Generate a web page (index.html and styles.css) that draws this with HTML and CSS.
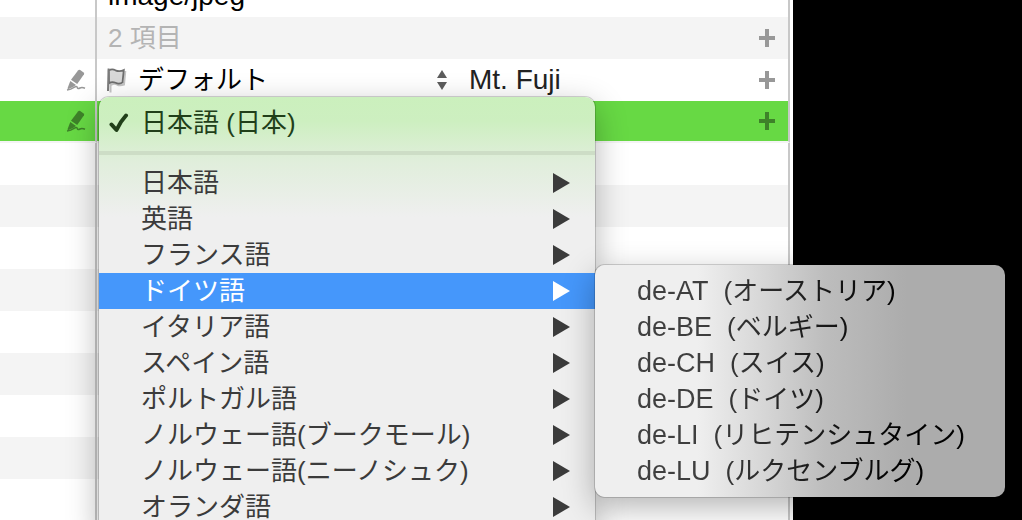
FILE: index.html
```
<!DOCTYPE html>
<html lang="ja">
<head>
    <meta charset="UTF-8">
    <meta name="viewport" content="width=device-width, initial-scale=1.0">
    <link rel="stylesheet" href="styles.css">
    <title>image/jpeg</title>
</head>
<body>
    <!-- Shared icons -->
    <svg class="sprite" aria-hidden="true">
        <symbol id="pen" viewBox="0 0 20 22">
            <path d="M12 1.5 Q13 .3 14.2 1 L17.6 3.4 Q18.600 4.300 18 5.300 L11.200 15 L5 10.700 Z"/>
            <path d="M4.300 12 L10 16 L7 18 L2.500 20 Q1.300 20.200 1.600 19 Z"/>
            <path d="M1 21 Q5 20.500 8 18.300 Q11 16.500 11.300 18.500 Q11.500 20.300 14 19 Q16 18 19 19.300" fill="none" stroke="currentColor" stroke-width="1.500"/>
        </symbol>
        <symbol id="plus" viewBox="0 0 16 18">
            <path d="M6 0h4v7h6v4h-6v7H6v-7H0V7h6z"/>
        </symbol>
        <symbol id="arrow" viewBox="0 0 17 20">
            <path d="M0 0L17 10L0 20z"/>
        </symbol>
    </svg>

    <main class="sheet">
        <table class="items">
            <tr>
                <td class="gutter"></td>
                <td class="kind type">image/jpeg</td>
                <td></td>
                <td class="action"></td>
            </tr>
            <tr>
                <td class="gutter"></td>
                <td class="kind count">2 項目</td>
                <td></td>
                <td class="action"><button class="icon-button" aria-label="追加"><svg class="plus"><use href="#plus"/></svg></button></td>
            </tr>
            <tr>
                <td class="gutter"><button class="icon-button" aria-label="編集"><svg class="pen"><use href="#pen"/></svg></button></td>
                <td class="kind">
                    <div class="picker">
                        <svg class="flag" viewBox="0 0 22 27" aria-hidden="true">
                            <path d="M4.500 4 V25.500 M5 18 Q8 15.500 11 17.500 Q14 19 18 17.500 L19.300 4" fill="none" stroke="#c4c4c4" stroke-width="2"/>
                            <path d="M2.800 3.500 Q6 1.500 9.500 3.300 Q13.500 5 17.800 3 L16.500 15.500 Q13 17.500 9.500 15.800 Q6 14.200 3 16.300 Z" fill="#d8d8d8" stroke="#6e6e6e" stroke-width="1.800"/>
                            <path d="M2.600 1.500 L2 24" stroke="#7b7b7b" stroke-width="2"/>
                        </svg>
                        <select aria-label="言語">
                            <option>デフォルト</option>
                            <option>日本語 (日本)</option>
                        </select>
                        <svg class="stepper" viewBox="0 0 10 20" aria-hidden="true">
                            <path d="M5 0L10 8H0z M0 12H10L5 20z"/>
                        </svg>
                    </div>
                </td>
                <td><input type="text" aria-label="名前" value="Mt. Fuji"></td>
                <td class="action"><button class="icon-button" aria-label="追加"><svg class="plus"><use href="#plus"/></svg></button></td>
            </tr>
            <tr class="selected">
                <td class="gutter"><button class="icon-button" aria-label="編集"><svg class="pen"><use href="#pen"/></svg></button></td>
                <td class="kind">
                    <div class="menu language-menu" role="menu">
                        <button class="item current" role="menuitemradio" aria-checked="true">
                            <svg class="check" viewBox="0 0 20 20" aria-hidden="true"><path d="M2.500 11.500 L7.500 17 Q11 9 17 2.500" fill="none" stroke="currentColor" stroke-width="4" stroke-linecap="round" stroke-linejoin="round"/></svg>
                            日本語 (日本)
                        </button>
                        <hr>
                        <button class="item" role="menuitem">日本語<svg class="arrow"><use href="#arrow"/></svg></button>
                        <button class="item" role="menuitem">英語<svg class="arrow"><use href="#arrow"/></svg></button>
                        <button class="item" role="menuitem">フランス語<svg class="arrow"><use href="#arrow"/></svg></button>
                        <div class="branch">
                            <button class="item open" role="menuitem" aria-expanded="true">ドイツ語<svg class="arrow"><use href="#arrow"/></svg></button>
                            <div class="menu submenu" role="menu">
                                <button class="item" role="menuitem"><span class="locale"><span class="code">de-AT&nbsp; </span>(オーストリア)</span></button>
                                <button class="item" role="menuitem"><span class="locale"><span class="code">de-BE&nbsp; </span>(ベルギー)</span></button>
                                <button class="item" role="menuitem"><span class="locale"><span class="code">de-CH&nbsp; </span>(スイス)</span></button>
                                <button class="item" role="menuitem"><span class="locale"><span class="code">de-DE&nbsp; </span>(ドイツ)</span></button>
                                <button class="item" role="menuitem"><span class="locale"><span class="code">de-LI&nbsp; </span>(リヒテンシュタイン)</span></button>
                                <button class="item" role="menuitem"><span class="locale"><span class="code">de-LU&nbsp; </span>(ルクセンブルグ)</span></button>
                            </div>
                        </div>
                        <button class="item" role="menuitem">イタリア語<svg class="arrow"><use href="#arrow"/></svg></button>
                        <button class="item" role="menuitem">スペイン語<svg class="arrow"><use href="#arrow"/></svg></button>
                        <button class="item" role="menuitem">ポルトガル語<svg class="arrow"><use href="#arrow"/></svg></button>
                        <button class="item" role="menuitem">ノルウェー語(ブークモール)<svg class="arrow"><use href="#arrow"/></svg></button>
                        <button class="item" role="menuitem">ノルウェー語(ニーノシュク)<svg class="arrow"><use href="#arrow"/></svg></button>
                        <button class="item" role="menuitem">オランダ語<svg class="arrow"><use href="#arrow"/></svg></button>
                    </div>
                </td>
                <td></td>
                <td class="action"><button class="icon-button" aria-label="追加"><svg class="plus"><use href="#plus"/></svg></button></td>
            </tr>
            <tr><td class="gutter"></td><td></td><td></td><td class="action"></td></tr>
            <tr><td class="gutter"></td><td></td><td></td><td class="action"></td></tr>
            <tr><td class="gutter"></td><td></td><td></td><td class="action"></td></tr>
            <tr><td class="gutter"></td><td></td><td></td><td class="action"></td></tr>
            <tr><td class="gutter"></td><td></td><td></td><td class="action"></td></tr>
            <tr><td class="gutter"></td><td></td><td></td><td class="action"></td></tr>
            <tr><td class="gutter"></td><td></td><td></td><td class="action"></td></tr>
            <tr><td class="gutter"></td><td></td><td></td><td class="action"></td></tr>
            <tr><td class="gutter"></td><td></td><td></td><td class="action"></td></tr>
        </table>
    </main>
</body>
</html>
```
FILE: styles.css
```
/* Reset */
* {
    margin: 0;
    padding: 0;
    box-sizing: border-box;
}

body {
    height: 100vh;
    overflow: hidden;
    background: #000;
    color: #000;
    font: 26px/36px "Liberation Sans", "Noto Sans CJK JP", sans-serif;
}

button, input, select {
    border: none;
    background: none;
    color: inherit;
    font: inherit;
    appearance: none;
}

svg {
    display: block;
    fill: currentColor;
}

.sprite {
    position: absolute;
    width: 0;
    height: 0;
}

/* Sheet, scrolled down by part of a row */
.sheet {
    display: flow-root;
    height: 100%;
    margin-right: 229px;
    padding-right: 3px;
    background: #fff;
}

.items {
    width: 100%;
    margin-top: -25px;
    table-layout: fixed;
    border-collapse: separate;
    border-spacing: 0;
}

.items tr {
    height: 42px;
}

.items tr:nth-child(even) {
    background: #f4f4f4;
}

.items td {
    vertical-align: middle;
}

.items .gutter {
    width: 97px;
    padding-left: 66px;
    border-right: 2px solid #c8c8c8;
}

.items .kind {
    position: relative;
    width: 372px;
    padding-left: 11px;
}

.items .action {
    width: 52px;
    padding-left: 21px;
    border-right: 2px solid #c8c8c8;
}

.items .type {
    font-size: 28px;
}

.items .count {
    color: #b4b4b4;
}

.items .selected td {
    background: #67d944;
    background-clip: padding-box;
    border-bottom: 2px solid #f4f4f4;
}

.icon-button {
    display: block;
    color: #989898;
}

.selected .icon-button {
    color: #3e8229;
}

.pen {
    width: 20px;
    height: 22px;
}

.plus {
    width: 16px;
    height: 18px;
}

/* Language picker */
.picker {
    display: flex;
    align-items: center;
    margin-left: -2px;
    padding-right: 22px;
}

.flag {
    width: 22px;
    height: 27px;
}

.picker select {
    flex: 1;
    margin-left: 10px;
}

.stepper {
    width: 10px;
    height: 20px;
    color: #5c5c5c;
}

.items input {
    display: block;
    width: 100%;
    color: #222;
    font-size: 28px;
}

/* Menus */
.menu {
    position: absolute;
    padding: 8px 0;
    border-radius: 10px;
    box-shadow: 0 0 0 1px rgba(0, 0, 0, 0.16), 0 10px 32px rgba(0, 0, 0, 0.3);
}

.language-menu {
    z-index: 1;
    top: -4px;
    left: 2px;
    width: 496px;
    background: linear-gradient(#cbf0bd, #cdefc0 24px, #e0eedb 64px, #efefef 120px);
}

.item {
    display: flex;
    align-items: center;
    width: 100%;
    height: 36px;
    padding: 0 25px 0 42px;
    color: #3b3b3b;
    text-align: left;
    white-space: nowrap;
}

.current {
    padding-left: 10px;
    color: #213f19;
}

.check {
    width: 20px;
    height: 20px;
    margin-right: 12px;
}

.menu hr {
    height: 4px;
    margin: 10px 0;
    border: none;
    background: #cdddc6;
}

.arrow {
    width: 17px;
    height: 20px;
    margin-left: auto;
}

.open {
    background: #4597fb;
    color: #fff;
}

.branch {
    position: relative;
}

.submenu {
    top: -8px;
    left: 100%;
    width: 410px;
    background: linear-gradient(to right, #efefef 25%, #d5d5d5 42%, #bdbdbd 56%, #acacac 76%);
}

/* Lettering darkens together with the panel */
.submenu .item {
    padding: 0;
}

.locale {
    flex: 1;
    padding-left: 42px;
    background: linear-gradient(to right, #3f3f3f 25%, #000 75%);
    background-clip: text;
    color: transparent;
}

.code {
    font-size: 27px;
}
```
